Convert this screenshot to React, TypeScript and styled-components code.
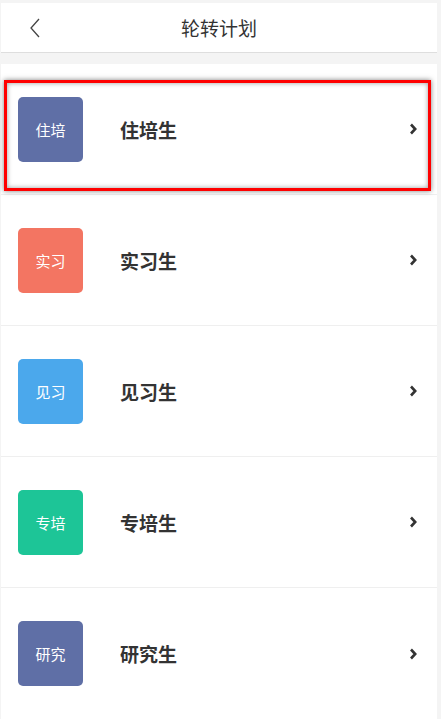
import styled, { createGlobalStyle } from "styled-components";

const GlobalStyle = createGlobalStyle`
  html, body {
    margin: 0;
    padding: 0;
    background: #f4f4f4;
  }
  body {
    font-family: "Noto Sans CJK SC", "Noto Sans", sans-serif;
  }
`;

const Page = styled.div`
  padding: 3px 4px 0 1px;
  min-height: 719px;
  box-sizing: border-box;
`;

const Header = styled.header`
  height: 49px;
  background: #fff;
  border-bottom: 1px solid #dedede;
  display: flex;
  align-items: center;
  justify-content: center;
  position: relative;
`;

const BackButton = styled.button`
  position: absolute;
  left: 22px;
  top: 13px;
  width: 24px;
  height: 24px;
  padding: 0;
  border: 0;
  background: none;
  display: flex;
  align-items: center;
  justify-content: center;
`;

const Title = styled.h1`
  margin: 0;
  font-size: 19px;
  font-weight: 400;
  color: #333;
`;

const List = styled.ul`
  list-style: none;
  margin: 11px 0 0;
  padding: 0;
  background: #fff;
`;

const Row = styled.li`
  position: relative;
  height: 131px;
  display: flex;
  align-items: center;
  padding: 0 19px 0 17px;
  border-bottom: 1px solid #efefef;
  box-sizing: border-box;
  &:last-child {
    border-bottom: 0;
  }
`;

const Badge = styled.div<{ $color: string }>`
  width: 65px;
  height: 65px;
  border-radius: 5px;
  background: ${(p) => p.$color};
  color: #fff;
  font-size: 15px;
  display: flex;
  align-items: center;
  justify-content: center;
  flex-shrink: 0;
`;

const Label = styled.span`
  margin-left: 37px;
  flex: 1;
  font-size: 19px;
  font-weight: 700;
  color: #333;
`;

const Highlight = styled.div`
  position: absolute;
  left: 3px;
  top: 16px;
  width: 427px;
  height: 111px;
  border: 3px solid #f00;
  box-sizing: border-box;
  box-shadow: 0 0 5px rgba(0, 0, 0, 0.5), inset 0 0 5px rgba(0, 0, 0, 0.4);
  pointer-events: none;
`;

const items = [
  { short: "住培", name: "住培生", color: "#5f6fa6" },
  { short: "实习", name: "实习生", color: "#f37562" },
  { short: "见习", name: "见习生", color: "#4ba8ec" },
  { short: "专培", name: "专培生", color: "#1dc597" },
  { short: "研究", name: "研究生", color: "#5f6fa6" },
];

const Chevron = () => (
  <svg width="10" height="14" viewBox="0 0 10 14">
    <path d="M3 2.5 L7.2 7 L3 11.5" fill="none" stroke="#333" strokeWidth="2.6" />
  </svg>
);

const App = () => (
  <Page>
    <GlobalStyle />
    <Header>
      <BackButton aria-label="返回">
        <svg width="14" height="22" viewBox="0 0 14 22">
          <path d="M11 2 L3 11 L11 20" fill="none" stroke="#444" strokeWidth="1.3" />
        </svg>
      </BackButton>
      <Title>轮转计划</Title>
    </Header>
    <List>
      {items.map((item, i) => (
        <Row key={item.name}>
          <Badge $color={item.color}>{item.short}</Badge>
          <Label>{item.name}</Label>
          <Chevron />
          {i === 0 && <Highlight />}
        </Row>
      ))}
    </List>
  </Page>
);

export default App;
